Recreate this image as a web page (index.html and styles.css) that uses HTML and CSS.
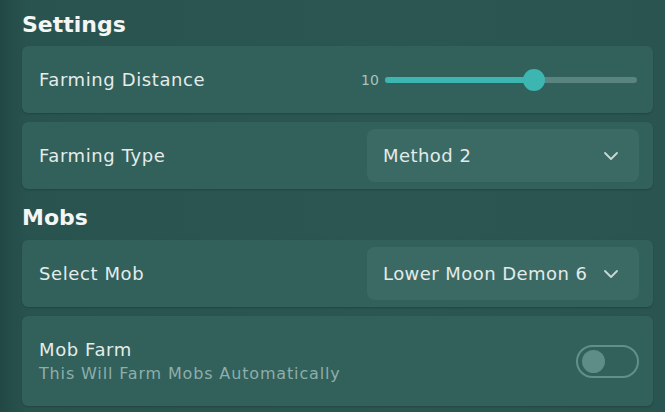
FILE: index.html
```html
<!DOCTYPE html>
<html>
<head>
<meta charset="utf-8">
<link rel="stylesheet" href="styles.css">
</head>
<body>
<div class="page">
  <h2 class="heading first">Settings</h2>
  <div class="list">
    <div class="card">
      <span class="label">Farming Distance</span>
      <div class="slider">
        <span class="value">10</span>
        <div class="track">
          <div class="fill" style="width:59%"></div>
          <div class="thumb" style="left:59%"></div>
        </div>
      </div>
    </div>
    <div class="card">
      <span class="label">Farming Type</span>
      <div class="dropdown">
        <span>Method 2</span>
        <svg class="chev" width="16" height="10" viewBox="0 0 16 10"><path d="M2 2 L8 8 L14 2" fill="none" stroke="#c9d9d6" stroke-width="1.8" stroke-linecap="round" stroke-linejoin="round"/></svg>
      </div>
    </div>
  </div>
  <h2 class="heading">Mobs</h2>
  <div class="list">
    <div class="card">
      <span class="label">Select Mob</span>
      <div class="dropdown">
        <span>Lower Moon Demon 6</span>
        <svg class="chev" width="16" height="10" viewBox="0 0 16 10"><path d="M2 2 L8 8 L14 2" fill="none" stroke="#c9d9d6" stroke-width="1.8" stroke-linecap="round" stroke-linejoin="round"/></svg>
      </div>
    </div>
    <div class="card tall">
      <div class="texts">
        <span class="label">Mob Farm</span>
        <span class="sub">This Will Farm Mobs Automatically</span>
      </div>
      <div class="toggle"><div class="knob"></div></div>
    </div>
  </div>
</div>
</body>
</html>
```
FILE: styles.css
```css
html, body {
  margin: 0;
  padding: 0;
}
body {
  width: 665px;
  height: 412px;
  overflow: hidden;
  background: linear-gradient(90deg, #224844 0%, #29534f 4%, #2b5652 60%, #2a5450 100%);
  font-family: "DejaVu Sans", Inter, sans-serif;
  color: #e6eeec;
}
.page {
  padding: 11px 12px 0 22px;
}
.heading {
  margin: 15px 0 8px 0;
  font-size: 22px;
  line-height: 28px;
  font-weight: 700;
  color: #f3f6f5;
}
.heading.first {
  margin-top: 0;
  margin-bottom: 7px;
}
.list {
  display: flex;
  flex-direction: column;
  gap: 9px;
}
.card {
  display: flex;
  align-items: center;
  justify-content: space-between;
  height: 67px;
  box-sizing: border-box;
  padding: 7px 14px 7px 17px;
  background: #32605b;
  border-radius: 6px;
  box-shadow: 0 1px 2px rgba(0,0,0,0.18);
}
.card.tall {
  height: 90px;
}
.label {
  font-size: 18px;
  line-height: 22px;
  letter-spacing: 0.6px;
  color: #e4ecea;
}
.texts {
  display: flex;
  flex-direction: column;
  gap: 3px;
}
.sub {
  font-size: 16px;
  line-height: 20px;
  letter-spacing: 0.85px;
  color: #8eaeaa;
}
.slider {
  display: flex;
  align-items: center;
  gap: 6px;
  margin-right: 2px;
}
.value {
  font-size: 14px;
  color: #a8c2be;
  width: 18px;
}
.track {
  position: relative;
  width: 252px;
  height: 6px;
  border-radius: 3px;
  background: #5a847f;
}
.fill {
  height: 100%;
  border-radius: 3px;
  background: #3db6b1;
}
.thumb {
  position: absolute;
  top: 50%;
  width: 22px;
  height: 22px;
  margin: -11px 0 0 -11px;
  border-radius: 50%;
  background: #3db6b1;
}
.dropdown {
  display: flex;
  align-items: center;
  justify-content: space-between;
  width: 272px;
  height: 53px;
  box-sizing: border-box;
  padding: 0 20px 0 16px;
  background: #3b6a65;
  border-radius: 8px;
  font-size: 18px;
  letter-spacing: 0.45px;
  color: #e2ebe9;
}
.toggle {
  width: 63px;
  height: 33px;
  box-sizing: border-box;
  border: 2px solid #628f8a;
  border-radius: 17px;
  display: flex;
  align-items: center;
  padding-left: 4px;
}
.knob {
  width: 23px;
  height: 23px;
  border-radius: 50%;
  background: #5e8c87;
}
```
